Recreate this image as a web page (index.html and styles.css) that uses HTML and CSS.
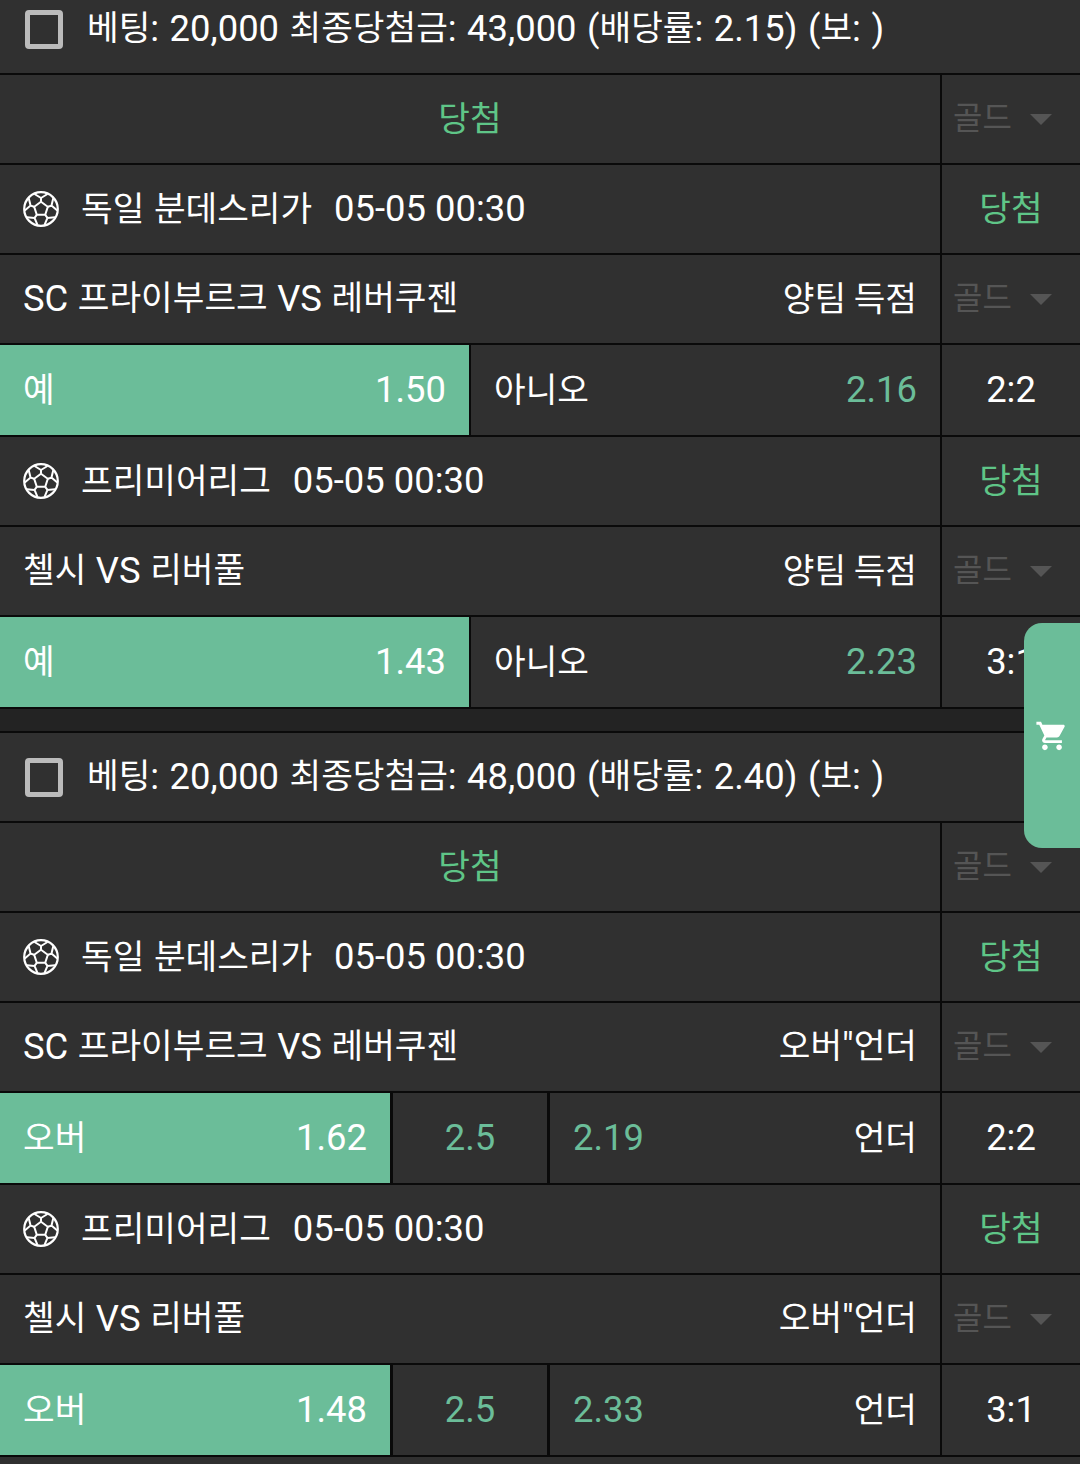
FILE: index.html
```html
<!DOCTYPE html>
<html lang="ko">
<head>
    <meta charset="UTF-8">
    <meta name="viewport" content="width=device-width, initial-scale=1.0">
    <title>베팅 내역</title>
    <link rel="stylesheet" href="styles.css">
</head>
<body>
    <svg class="defs" width="0" height="0">
        <symbol id="ball" viewBox="0 0 36 36">
            <circle cx="18" cy="18" r="16.8" fill="none" stroke="#fff" stroke-width="2.2"/>
            <polygon points="18,10.8 24.8,15.8 22.2,23.8 13.8,23.8 11.2,15.8" fill="none" stroke="#fff" stroke-width="2"/>
            <path id="spoke" d="M18 10.8V7L11.5 3M18 7l6.5-4" fill="none" stroke="#fff" stroke-width="2"/>
            <use href="#spoke" transform="rotate(72 18 18)"/>
            <use href="#spoke" transform="rotate(144 18 18)"/>
            <use href="#spoke" transform="rotate(216 18 18)"/>
            <use href="#spoke" transform="rotate(288 18 18)"/>
        </symbol>
    </svg>

    <div class="slip first">
        <div class="row head"><span class="check"></span><span class="title"><span class="ko">베팅</span>: 20,000 <span class="ko">최종당첨금</span>: 43,000 (<span class="ko">배당률</span>: 2.15) (<span class="ko">보</span>: )</span></div>
        <div class="row">
            <div class="main center win"><span class="ko">당첨</span></div>
            <div class="side gold"><span class="ko">골드</span><i class="caret"></i></div>
        </div>
        <div class="row">
            <div class="main"><svg class="ball"><use href="#ball"/></svg><span class="ko league">독일 분데스리가</span><span>05-05 00:30</span></div>
            <div class="side win"><span class="ko">당첨</span></div>
        </div>
        <div class="row">
            <div class="main between"><span>SC <span class="ko">프라이부르크</span> VS <span class="ko">레버쿠젠</span></span><span class="ko">양팀 득점</span></div>
            <div class="side gold"><span class="ko">골드</span><i class="caret"></i></div>
        </div>
        <div class="row odds">
            <div class="pick half on"><span class="ko">예</span><span>1.50</span></div>
            <div class="pick half"><span class="ko">아니오</span><span class="rate">2.16</span></div>
            <div class="side">2:2</div>
        </div>
        <div class="row">
            <div class="main"><svg class="ball"><use href="#ball"/></svg><span class="ko league">프리미어리그</span><span>05-05 00:30</span></div>
            <div class="side win"><span class="ko">당첨</span></div>
        </div>
        <div class="row">
            <div class="main between"><span><span class="ko">첼시</span> VS <span class="ko">리버풀</span></span><span class="ko">양팀 득점</span></div>
            <div class="side gold"><span class="ko">골드</span><i class="caret"></i></div>
        </div>
        <div class="row odds">
            <div class="pick half on"><span class="ko">예</span><span>1.43</span></div>
            <div class="pick half"><span class="ko">아니오</span><span class="rate">2.23</span></div>
            <div class="side">3:1</div>
        </div>
    </div>

    <div class="gap"></div>

    <div class="slip">
        <div class="row head"><span class="check"></span><span class="title"><span class="ko">베팅</span>: 20,000 <span class="ko">최종당첨금</span>: 48,000 (<span class="ko">배당률</span>: 2.40) (<span class="ko">보</span>: )</span></div>
        <div class="row">
            <div class="main center win"><span class="ko">당첨</span></div>
            <div class="side gold"><span class="ko">골드</span><i class="caret"></i></div>
        </div>
        <div class="row">
            <div class="main"><svg class="ball"><use href="#ball"/></svg><span class="ko league">독일 분데스리가</span><span>05-05 00:30</span></div>
            <div class="side win"><span class="ko">당첨</span></div>
        </div>
        <div class="row">
            <div class="main between"><span>SC <span class="ko">프라이부르크</span> VS <span class="ko">레버쿠젠</span></span><span><span class="ko">오버</span>"<span class="ko">언더</span></span></div>
            <div class="side gold"><span class="ko">골드</span><i class="caret"></i></div>
        </div>
        <div class="row odds">
            <div class="pick over on"><span class="ko">오버</span><span>1.62</span></div>
            <div class="pick line rate">2.5</div>
            <div class="pick under"><span class="rate">2.19</span><span class="ko">언더</span></div>
            <div class="side">2:2</div>
        </div>
        <div class="row">
            <div class="main"><svg class="ball"><use href="#ball"/></svg><span class="ko league">프리미어리그</span><span>05-05 00:30</span></div>
            <div class="side win"><span class="ko">당첨</span></div>
        </div>
        <div class="row">
            <div class="main between"><span><span class="ko">첼시</span> VS <span class="ko">리버풀</span></span><span><span class="ko">오버</span>"<span class="ko">언더</span></span></div>
            <div class="side gold"><span class="ko">골드</span><i class="caret"></i></div>
        </div>
        <div class="row odds">
            <div class="pick over on"><span class="ko">오버</span><span>1.48</span></div>
            <div class="pick line rate">2.5</div>
            <div class="pick under"><span class="rate">2.33</span><span class="ko">언더</span></div>
            <div class="side">3:1</div>
        </div>
    </div>

    <div class="cart">
        <svg viewBox="0 0 24 24" width="34" height="34"><path fill="#fff" d="M7 18c-1.1 0-1.99.9-1.99 2S5.9 22 7 22s2-.9 2-2-.9-2-2-2zM1 2v2h2l3.6 7.59-1.35 2.45c-.16.28-.25.61-.25.96 0 1.1.9 2 2 2h12v-2H7.42c-.14 0-.25-.11-.25-.25l.03-.12.9-1.63h7.45c.75 0 1.41-.41 1.75-1.03l3.58-6.49c.08-.14.12-.31.12-.48 0-.55-.45-1-1-1H5.21l-.94-2H1zm16 16c-1.1 0-1.99.9-1.99 2s.89 2 1.99 2 2-.9 2-2-.9-2-2-2z"/></svg>
    </div>
</body>
</html>
```

FILE: styles.css
```css
html, body {
    height: 100%;
}
body {
    margin: 0;
    overflow: hidden;
    background-color: #303030;
    color: #fff;
    font-family: Roboto, "Noto Sans CJK KR", sans-serif;
    font-size: 36.4px;
    line-height: 44px;
    position: relative;
}
.defs {
    position: absolute;
}
.ko {
    font-family: "Noto Sans CJK KR", sans-serif;
    font-size: 34.4px;
    line-height: 1;
    vertical-align: 1px;
}
/* the hangul sits low in its line box, lift it when it is a flex item */
.main > .ko, .side > .ko, .pick > .ko {
    line-height: 44px;
    margin-bottom: 6px;
}
.first {
    margin-top: -15px;
}
.gap {
    height: 22px;
    background-color: #232323;
    border-bottom: 2px solid #0a0a0a;
}
.row {
    display: flex;
    height: 88px;
    border-bottom: 2px solid #0a0a0a;
}
.head {
    align-items: center;
    padding-left: 25px;
    gap: 24px;
}
.title {
    word-spacing: 1.5px;
}
.check {
    width: 28px;
    height: 29px;
    border: 5px solid #bbb;
    border-radius: 4px;
}
.main {
    width: 940px;
    box-sizing: border-box;
    display: flex;
    align-items: center;
    padding: 0 23px;
}
.center {
    justify-content: center;
}
.between {
    justify-content: space-between;
}
.between > span:first-child {
    word-spacing: 0.5px;
}
.between > .ko {
    word-spacing: -2px;
}
.side {
    width: 138px;
    border-left: 2px solid #0a0a0a;
    display: flex;
    align-items: center;
    justify-content: center;
}
.win {
    color: #5fc587;
}
.gold {
    justify-content: flex-start;
    box-sizing: border-box;
    padding-left: 11px;
    color: #555;
    gap: 18px;
}
.side.gold > .ko {
    font-size: 32px;
    margin-bottom: 8px;
}
.caret {
    border-left: 11px solid transparent;
    border-right: 11px solid transparent;
    border-top: 11px solid #555;
}
.ball {
    width: 36px;
    height: 36px;
    margin-right: 22px;
}
.main > .league {
    margin-right: 22px;
}
.odds {
    height: 90px;
}
.pick {
    box-sizing: border-box;
    display: flex;
    align-items: center;
    justify-content: space-between;
    padding: 0 23px;
}
.half {
    width: 469px;
}
.half + .half {
    width: 471px;
    border-left: 2px solid #0a0a0a;
}
.on {
    background-color: #6bbd99;
}
.rate {
    color: #6bbd99;
}
.over {
    width: 390px;
}
.line {
    width: 157px;
    justify-content: center;
    border-left: 3px solid #0a0a0a;
}
.under {
    width: 393px;
    border-left: 3px solid #0a0a0a;
}
.cart {
    position: absolute;
    left: 1024px;
    top: 623px;
    width: 56px;
    height: 225px;
    background-color: #6bbd99;
    border-radius: 18px 0 0 18px;
    display: flex;
    align-items: center;
    justify-content: center;
}
```
